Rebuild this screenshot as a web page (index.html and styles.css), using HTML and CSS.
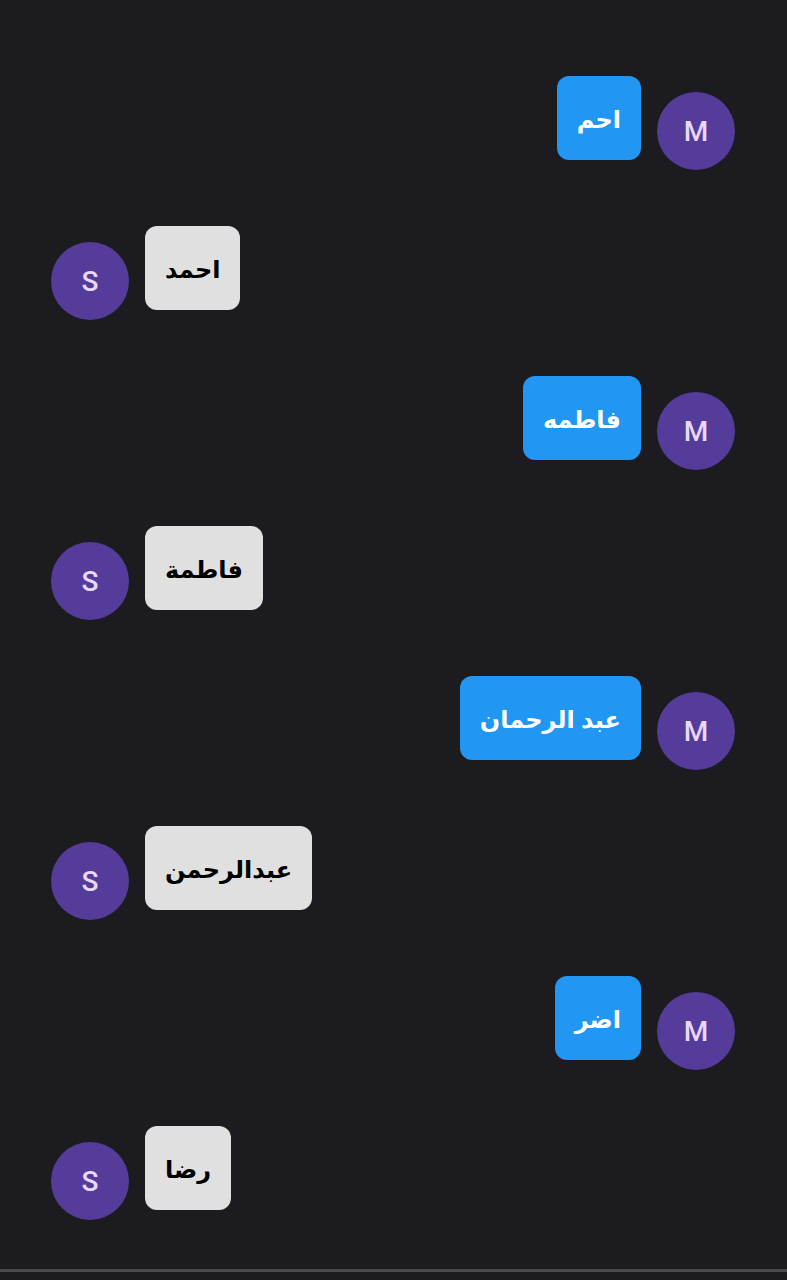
FILE: index.html
```html
<!DOCTYPE html>
<html lang="ar">
<head>
<meta charset="utf-8">
<link rel="stylesheet" href="styles.css">
</head>
<body>
<div class="chat">
  <div class="row me"><div class="bubble blue">احم</div><div class="avatar">M</div></div>
  <div class="row other"><div class="avatar">S</div><div class="bubble gray">احمد</div></div>
  <div class="row me"><div class="bubble blue">فاطمه</div><div class="avatar">M</div></div>
  <div class="row other"><div class="avatar">S</div><div class="bubble gray">فاطمة</div></div>
  <div class="row me"><div class="bubble blue">عبد الرحمان</div><div class="avatar">M</div></div>
  <div class="row other"><div class="avatar">S</div><div class="bubble gray">عبدالرحمن</div></div>
  <div class="row me"><div class="bubble blue">اضر</div><div class="avatar">M</div></div>
  <div class="row other"><div class="avatar">S</div><div class="bubble gray">رضا</div></div>
</div>
<div class="footer"></div>
</body>
</html>
```
FILE: styles.css
```css
html, body {
  margin: 0;
  padding: 0;
  background: #1c1b20;
  height: 1280px;
  overflow: hidden;
}
body {
  display: flex;
  flex-direction: column;
  font-family: "Noto Sans", "DejaVu Sans", sans-serif;
}
.chat {
  display: flex;
  flex-direction: column;
  gap: 56px;
  padding: 76px 52px 0 51px;
  height: 1193px;
}
.row {
  display: flex;
  align-items: flex-start;
  gap: 16px;
}
.row.me { justify-content: flex-end; }
.row.other { justify-content: flex-start; }
.bubble {
  height: 84px;
  box-sizing: border-box;
  padding: 0 20px;
  border-radius: 12px;
  display: flex;
  align-items: center;
  font-size: 24px;
  font-weight: 700;
  direction: rtl;
}
.bubble.blue { background: #2196f3; color: #ffffff; }
.bubble.gray { background: #e0e0e0; color: #000000; }
.avatar {
  width: 78px;
  height: 78px;
  margin-top: 16px;
  border-radius: 50%;
  background: #553c9a;
  color: #e9d8fd;
  font-family: Roboto, "Noto Sans", sans-serif;
  font-weight: 500;
  font-size: 28px;
  display: flex;
  align-items: center;
  justify-content: center;
  flex-shrink: 0;
}
.footer {
  margin-top: auto;
  height: 8px;
  border-top: 3px solid #4a494e;
}
```
